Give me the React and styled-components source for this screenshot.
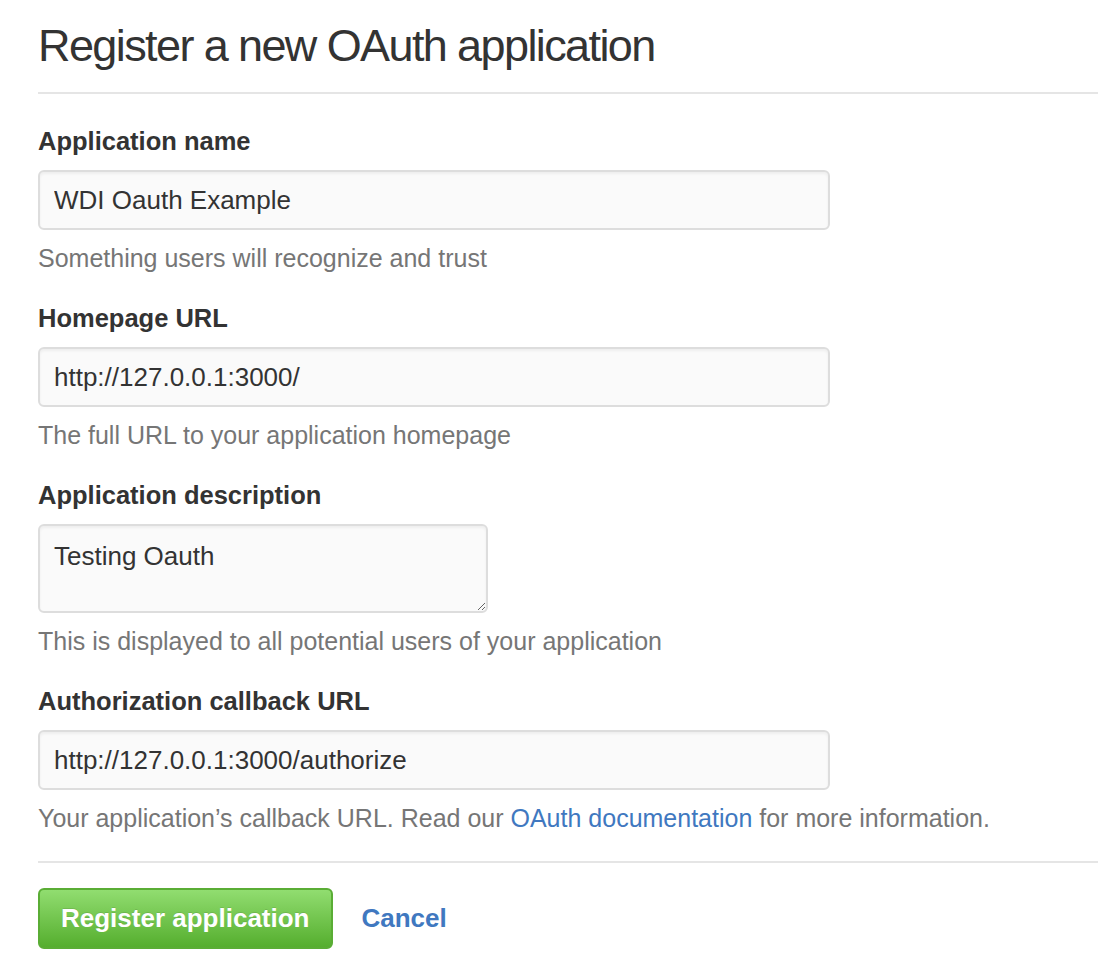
import React from 'react'
import styled, { createGlobalStyle } from 'styled-components'

const GlobalStyle = createGlobalStyle`
  body {
    margin: 0;
    background: #fff;
    font-family: "Liberation Sans", Arial, sans-serif;
    color: #333;
  }
`;

const Page = styled.div`
  padding: 20px 0 0 38px;
`;

const Header = styled.div`
  border-bottom: 2px solid #e5e5e5;
  padding-bottom: 20px;
  margin-bottom: 33px;
`;

const Title = styled.h1`
  margin: 0;
  font-size: 45px;
  font-weight: 400;
  line-height: 52px;
  letter-spacing: -1.6px;
  color: #333;
`;

const Field = styled.div`
  margin-bottom: 31px;
`;

const Label = styled.label`
  display: block;
  font-size: 25.5px;
  font-weight: 700;
  line-height: 28px;
  margin-bottom: 15px;
  color: #333;
`;

const Input = styled.input`
  display: block;
  box-sizing: border-box;
  width: 792px;
  height: 60px;
  padding: 0 14px;
  font-family: inherit;
  font-size: 26px;
  color: #333;
  background: #fafafa;
  border: 2px solid #ddd;
  border-radius: 6px;
  box-shadow: inset 0 2px 3px rgba(0, 0, 0, 0.05);
  outline: none;
`;

const TextArea = styled.textarea`
  display: block;
  box-sizing: border-box;
  width: 450px;
  height: 89px;
  padding: 14px 14px 10px;
  font-family: inherit;
  font-size: 26px;
  line-height: 32px;
  color: #333;
  background: #fafafa;
  border: 2px solid #ddd;
  border-radius: 6px;
  box-shadow: inset 0 2px 3px rgba(0, 0, 0, 0.05);
  outline: none;
  resize: vertical;
`;

const Note = styled.p`
  margin: 13px 0 0;
  font-size: 25px;
  line-height: 30px;
  color: #767676;
`;

const Link = styled.a`
  color: #4078c0;
  text-decoration: none;
`;

const Footer = styled.div`
  border-top: 2px solid #e5e5e5;
  margin-top: -3px;
  padding-top: 25px;
  display: flex;
  align-items: center;
  gap: 29px;
`;

const Button = styled.button`
  height: 61px;
  padding: 0 21px;
  font-family: inherit;
  font-size: 26px;
  font-weight: 700;
  color: #fff;
  background: linear-gradient(#91dd70, #55ae2e);
  border: 2px solid #5aad35;
  border-radius: 6px;
  text-shadow: 0 -1px 0 rgba(0, 0, 0, 0.1);
  cursor: pointer;
`;

const CancelLink = styled.a`
  font-size: 26px;
  font-weight: 700;
  color: #4078c0;
  text-decoration: none;
`;

const fields = [
  { label: 'Application name', value: 'WDI Oauth Example', note: 'Something users will recognize and trust' },
  { label: 'Homepage URL', value: 'http://127.0.0.1:3000/', note: 'The full URL to your application homepage' },
];

const App = () => {
  return (
    <>
      <GlobalStyle />
      <Page>
        <Header>
          <Title>Register a new OAuth application</Title>
        </Header>
        <form onSubmit={e => e.preventDefault()}>
          {fields.map(f => (
            <Field key={f.label}>
              <Label>{f.label}</Label>
              <Input defaultValue={f.value} />
              <Note>{f.note}</Note>
            </Field>
          ))}
          <Field>
            <Label>Application description</Label>
            <TextArea defaultValue="Testing Oauth" />
            <Note>This is displayed to all potential users of your application</Note>
          </Field>
          <Field>
            <Label>Authorization callback URL</Label>
            <Input defaultValue="http://127.0.0.1:3000/authorize" />
            <Note>
              Your application’s callback URL. Read our <Link href="#">OAuth documentation</Link> for more information.
            </Note>
          </Field>
          <Footer>
            <Button type="submit">Register application</Button>
            <CancelLink href="#">Cancel</CancelLink>
          </Footer>
        </form>
      </Page>
    </>
  )
}

export default App
